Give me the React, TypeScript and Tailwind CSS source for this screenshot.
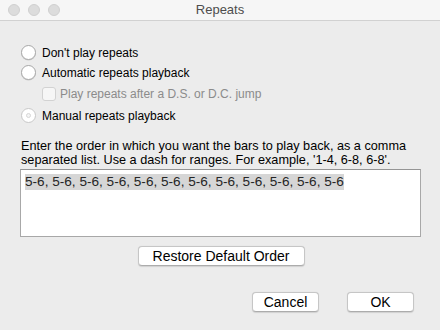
import React from "react";

const font = { fontFamily: '"Liberation Sans", Arial, sans-serif' };

function Radio({ label, dim }: { label: string; dim?: boolean }) {
  return (
    <div className="flex h-[15px] items-center">
      <span
        className={`flex h-[15px] w-[15px] items-center justify-center rounded-full border bg-white ${
          dim ? "border-[#c8c8c8]" : "border-[#a9a9a9] shadow-[0_0.5px_0.5px_rgba(0,0,0,0.15)]"
        }`}
      >
        {dim && <span className="h-[5px] w-[5px] rounded-full border border-[#d6d6d6] bg-[#f4f4f4]" />}
      </span>
      <span className="ml-[6px] text-[12px] text-black">{label}</span>
    </div>
  );
}

function Button({ children, className }: { children: React.ReactNode; className: string }) {
  return (
    <button
      className={`flex h-[20px] items-center justify-center rounded-[4px] border border-[#c6c6c6] border-b-[#acacac] bg-white text-[14px] text-black shadow-[0_0.5px_1px_rgba(0,0,0,0.12)] ${className}`}
    >
      {children}
    </button>
  );
}

export default function App() {
  return (
    <div className="flex h-[330px] w-[440px] flex-col bg-[#ececec]" style={font}>
      <div className="relative flex h-[21px] items-center border-b border-[#d1d1d1] bg-[#f6f6f6]">
        <div className="ml-[8px] flex gap-[8px]">
          <span className="h-[12px] w-[12px] rounded-full border border-[#d0d0d0] bg-[#dcdcdc]" />
          <span className="h-[12px] w-[12px] rounded-full border border-[#d0d0d0] bg-[#dcdcdc]" />
          <span className="h-[12px] w-[12px] rounded-full border border-[#d0d0d0] bg-[#dcdcdc]" />
        </div>
        <div className="absolute inset-0 flex items-center justify-center text-[13px] text-[#4d4d4d]">
          Repeats
        </div>
      </div>

      <div className="flex flex-col pl-[21px] pr-[19px]">
        <div className="mt-[24px]">
          <Radio label="Don't play repeats" />
        </div>
        <div className="mt-[5px]">
          <Radio label="Automatic repeats playback" />
        </div>
        <div className="mt-[7px] ml-[21px] flex h-[14px] items-center">
          <span className="h-[14px] w-[14px] rounded-[3px] border border-[#d2d2d2] bg-[#f6f6f6]" />
          <span className="ml-[4px] text-[12px] text-[#8b8b8b]">Play repeats after a D.S. or D.C. jump</span>
        </div>
        <div className="mt-[7px]">
          <Radio label="Manual repeats playback" dim />
        </div>

        <p className="mt-[16px] text-[12.7px] leading-[14px] text-black">
          Enter the order in which you want the bars to play back, as a comma separated list. Use a
          dash for ranges. For example, '1-4, 6-8, 6-8'.
        </p>

        <div className="mt-[2px] -ml-px h-[68px] border border-[#a8a8a8] border-t-[#959595] bg-white pl-[4px] pt-[6px] text-[13.6px] leading-[12px]">
          <span className="bg-[#d6d6d6] pb-px text-[#262626]">
            5-6, 5-6, 5-6, 5-6, 5-6, 5-6, 5-6, 5-6, 5-6, 5-6, 5-6, 5-6
          </span>
        </div>

        <div className="mt-[9px] flex justify-center">
          <Button className="w-[167px]">Restore Default Order</Button>
        </div>

        <div className="mt-[26px] flex justify-end gap-[28px] pr-[7px]">
          <Button className="w-[67px]">Cancel</Button>
          <Button className="w-[67px]">OK</Button>
        </div>
      </div>
    </div>
  );
}
